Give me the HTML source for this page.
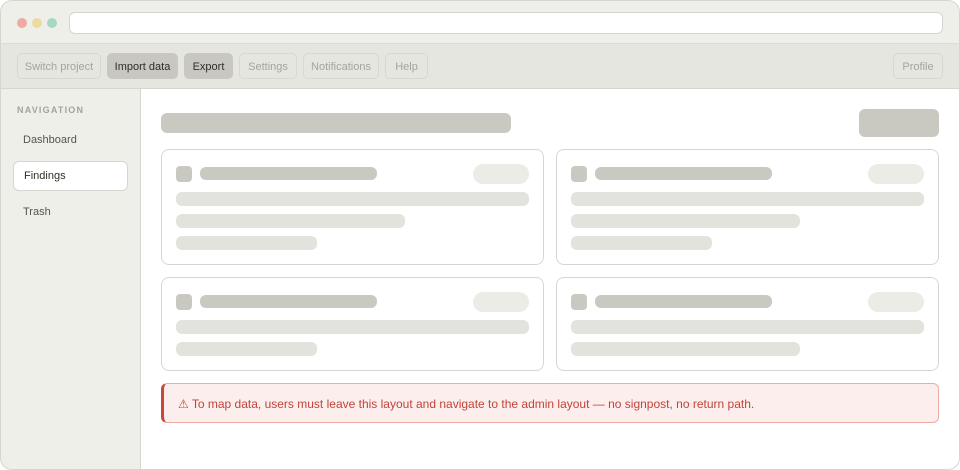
<!DOCTYPE html><html><head><style>
*{box-sizing:border-box;margin:0;padding:0}
body{width:960px;height:470px;background:#fff;font-family:"Liberation Sans",sans-serif;position:relative;overflow:hidden}
.a{position:absolute}
.win{left:0;top:0;width:960px;height:470px;border-radius:12px;overflow:hidden;background:#fff}
.frame{left:0;top:0;width:960px;height:470px;border:1px solid #d6d6d0;border-radius:12px}
.btn{position:absolute;top:53px;height:26px;border:1px solid #d8d8d2;border-radius:5px;font-size:11px;color:#a4a49c;display:flex;align-items:center;justify-content:center;padding-top:2px}
.dk{background:#c8c8c0;border-color:#c8c8c0;color:#2e2e2a}
.card{position:absolute;border:1px solid #d6d6d0;border-radius:8px;background:#fff}
.b{position:absolute;border-radius:6px}
.d{background:#c9c9c1}.l{background:#e3e3dd}
</style></head><body>
<div class="a win">
<div class="a" style="left:0;top:0;width:960px;height:44px;background:#efefea;border-bottom:1px solid #dcdcd5"></div>
<div class="a" style="left:17px;top:18px;width:10px;height:10px;border-radius:50%;background:#eeaaa5"></div>
<div class="a" style="left:32px;top:18px;width:10px;height:10px;border-radius:50%;background:#eed9a2"></div>
<div class="a" style="left:47px;top:18px;width:10px;height:10px;border-radius:50%;background:#a8d8c0"></div>
<div class="a" style="left:69px;top:12px;width:874px;height:22px;border:1px solid #d6d6d0;border-radius:6px;background:#fff"></div>
<div class="a" style="left:0;top:44px;width:960px;height:45px;background:#e6e6e0;border-bottom:1px solid #d6d6d0"></div>
<div class="btn" style="left:17px;width:84px">Switch project</div>
<div class="btn dk" style="left:107px;width:71px">Import data</div>
<div class="btn dk" style="left:184px;width:49px">Export</div>
<div class="btn" style="left:239px;width:58px">Settings</div>
<div class="btn" style="left:303px;width:76px">Notifications</div>
<div class="btn" style="left:385px;width:43px">Help</div>
<div class="btn" style="left:893px;width:50px">Profile</div>
<div class="a" style="left:0;top:89px;width:141px;height:381px;background:#efefea;border-right:1px solid #d6d6d0"></div>
<div class="a" style="left:17px;top:105px;font-size:9px;font-weight:bold;letter-spacing:1.2px;color:#a4a49c">NAVIGATION</div>
<div class="a" style="left:23px;top:134px;font-size:11px;color:#55554f">Dashboard</div>
<div class="a" style="left:13px;top:161px;width:115px;height:30px;background:#fff;border:1px solid #d6d6d0;border-radius:6px"></div>
<div class="a" style="left:24px;top:170px;font-size:11px;color:#2e2e2a">Findings</div>
<div class="a" style="left:23px;top:206px;font-size:11px;color:#55554f">Trash</div>
<div class="b d" style="left:161px;top:113px;width:350px;height:20px"></div>
<div class="b d" style="left:859px;top:109px;width:80px;height:28px"></div>

<div class="card" style="left:161px;top:149px;width:383px;height:116px"></div>
<div class="b d" style="left:176px;top:166px;width:16px;height:16px;border-radius:4px"></div>
<div class="b d" style="left:200px;top:167px;width:177px;height:13px"></div>
<div class="b" style="left:473px;top:164px;width:56px;height:20px;border-radius:10px;background:#ececE7"></div>
<div class="b l" style="left:176px;top:192px;width:353px;height:14px"></div>
<div class="b l" style="left:176px;top:214px;width:229px;height:14px"></div>
<div class="b l" style="left:176px;top:236px;width:141px;height:14px"></div>

<div class="card" style="left:556px;top:149px;width:383px;height:116px"></div>
<div class="b d" style="left:571px;top:166px;width:16px;height:16px;border-radius:4px"></div>
<div class="b d" style="left:595px;top:167px;width:177px;height:13px"></div>
<div class="b" style="left:868px;top:164px;width:56px;height:20px;border-radius:10px;background:#ececE7"></div>
<div class="b l" style="left:571px;top:192px;width:353px;height:14px"></div>
<div class="b l" style="left:571px;top:214px;width:229px;height:14px"></div>
<div class="b l" style="left:571px;top:236px;width:141px;height:14px"></div>

<div class="card" style="left:161px;top:277px;width:383px;height:94px"></div>
<div class="b d" style="left:176px;top:294px;width:16px;height:16px;border-radius:4px"></div>
<div class="b d" style="left:200px;top:295px;width:177px;height:13px"></div>
<div class="b" style="left:473px;top:292px;width:56px;height:20px;border-radius:10px;background:#ececE7"></div>
<div class="b l" style="left:176px;top:320px;width:353px;height:14px"></div>
<div class="b l" style="left:176px;top:342px;width:141px;height:14px"></div>

<div class="card" style="left:556px;top:277px;width:383px;height:94px"></div>
<div class="b d" style="left:571px;top:294px;width:16px;height:16px;border-radius:4px"></div>
<div class="b d" style="left:595px;top:295px;width:177px;height:13px"></div>
<div class="b" style="left:868px;top:292px;width:56px;height:20px;border-radius:10px;background:#ececE7"></div>
<div class="b l" style="left:571px;top:320px;width:353px;height:14px"></div>
<div class="b l" style="left:571px;top:342px;width:229px;height:14px"></div>

<div class="a" style="left:161px;top:383px;width:778px;height:40px;background:#fbeeec;border:1px solid #eeaaa2;border-left:3px solid #c8463a;border-radius:6px;font-size:12px;color:#c4433a;padding:13px 0 0 14px">⚠ To map data, users must leave this layout and navigate to the admin layout — no signpost, no return path.</div>
</div>
<div class="a frame"></div>
</body></html>
